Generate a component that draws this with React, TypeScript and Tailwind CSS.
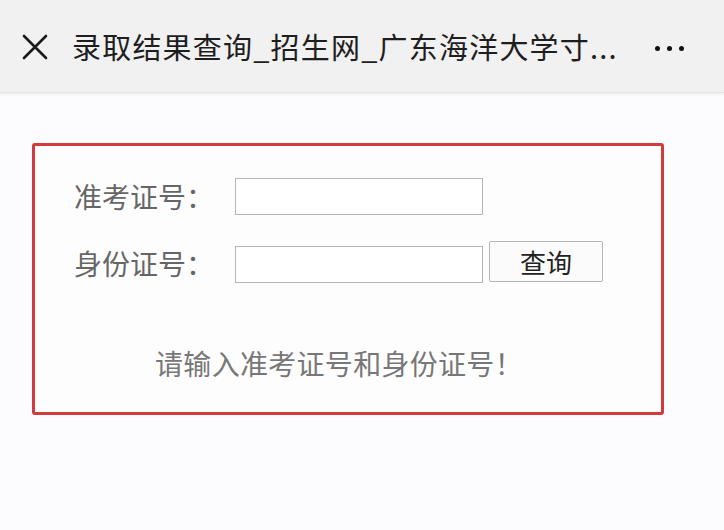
const FONT = "font-['Noto_Sans_CJK_SC','Noto_Sans',sans-serif]"

function Header() {
  return (
    <div className="flex h-[93px] items-center bg-[#f1f1f1] shadow-[0_1px_3px_rgba(0,0,0,0.08)] border-b border-[#e4e4e4]">
      <svg width="26" height="26" viewBox="0 0 26 26" className="ml-[22px] mt-[2px] shrink-0">
        <path d="M2 2L24 24M24 2L2 24" stroke="#1a1a1a" strokeWidth="2.6" strokeLinecap="round" />
      </svg>
      <div className={`ml-[24px] mt-[2px] whitespace-nowrap text-[29px] leading-normal tracking-[1.2px] text-[#1e1e1e] ${FONT}`}>
        录取结果查询_招生网_广东海洋大学寸...
      </div>
      <div className="ml-auto mr-[40px] mt-[4px] flex gap-[7px]">
        <span className="h-[5px] w-[5px] rounded-full bg-[#111]" />
        <span className="h-[5px] w-[5px] rounded-full bg-[#111]" />
        <span className="h-[5px] w-[5px] rounded-full bg-[#111]" />
      </div>
    </div>
  )
}

export default function App() {
  return (
    <div className={`h-[530px] w-[724px] overflow-hidden bg-[#fcfbfd] ${FONT}`}>
      <Header />
      <div className="pl-[32px] pt-[50px]">
        <div className="h-[272px] w-[632px] rounded-[3px] border-[3px] border-[#d23b3b] bg-[#fefdfe]">
          <div className="flex flex-col gap-[29px] pl-[39px] pt-[32px]">
            <div className="flex items-center">
              <span className="w-[161px] -translate-y-[1px] text-[28px] leading-none text-[#666]">准考证号：</span>
              <input className="h-[37px] w-[248px] border border-[#b5b5b5] bg-white outline-none" />
            </div>
            <div className="flex items-center">
              <span className="w-[161px] -translate-y-[2px] text-[28px] leading-none text-[#666]">身份证号：</span>
              <input className="h-[37px] w-[248px] border border-[#b5b5b5] bg-white outline-none" />
              <button className="ml-[6px] h-[41px] w-[114px] -translate-y-[3px] rounded-[2px] border border-[#b5b5b5] bg-[#fbfbfb] text-[26px] leading-none text-[#222]">
                查询
              </button>
            </div>
          </div>
          <div className="mt-[64px] pr-[18px] text-center text-[28px] leading-none tracking-[0.3px] text-[#777]">
            请输入准考证号和身份证号！
          </div>
        </div>
      </div>
    </div>
  )
}
